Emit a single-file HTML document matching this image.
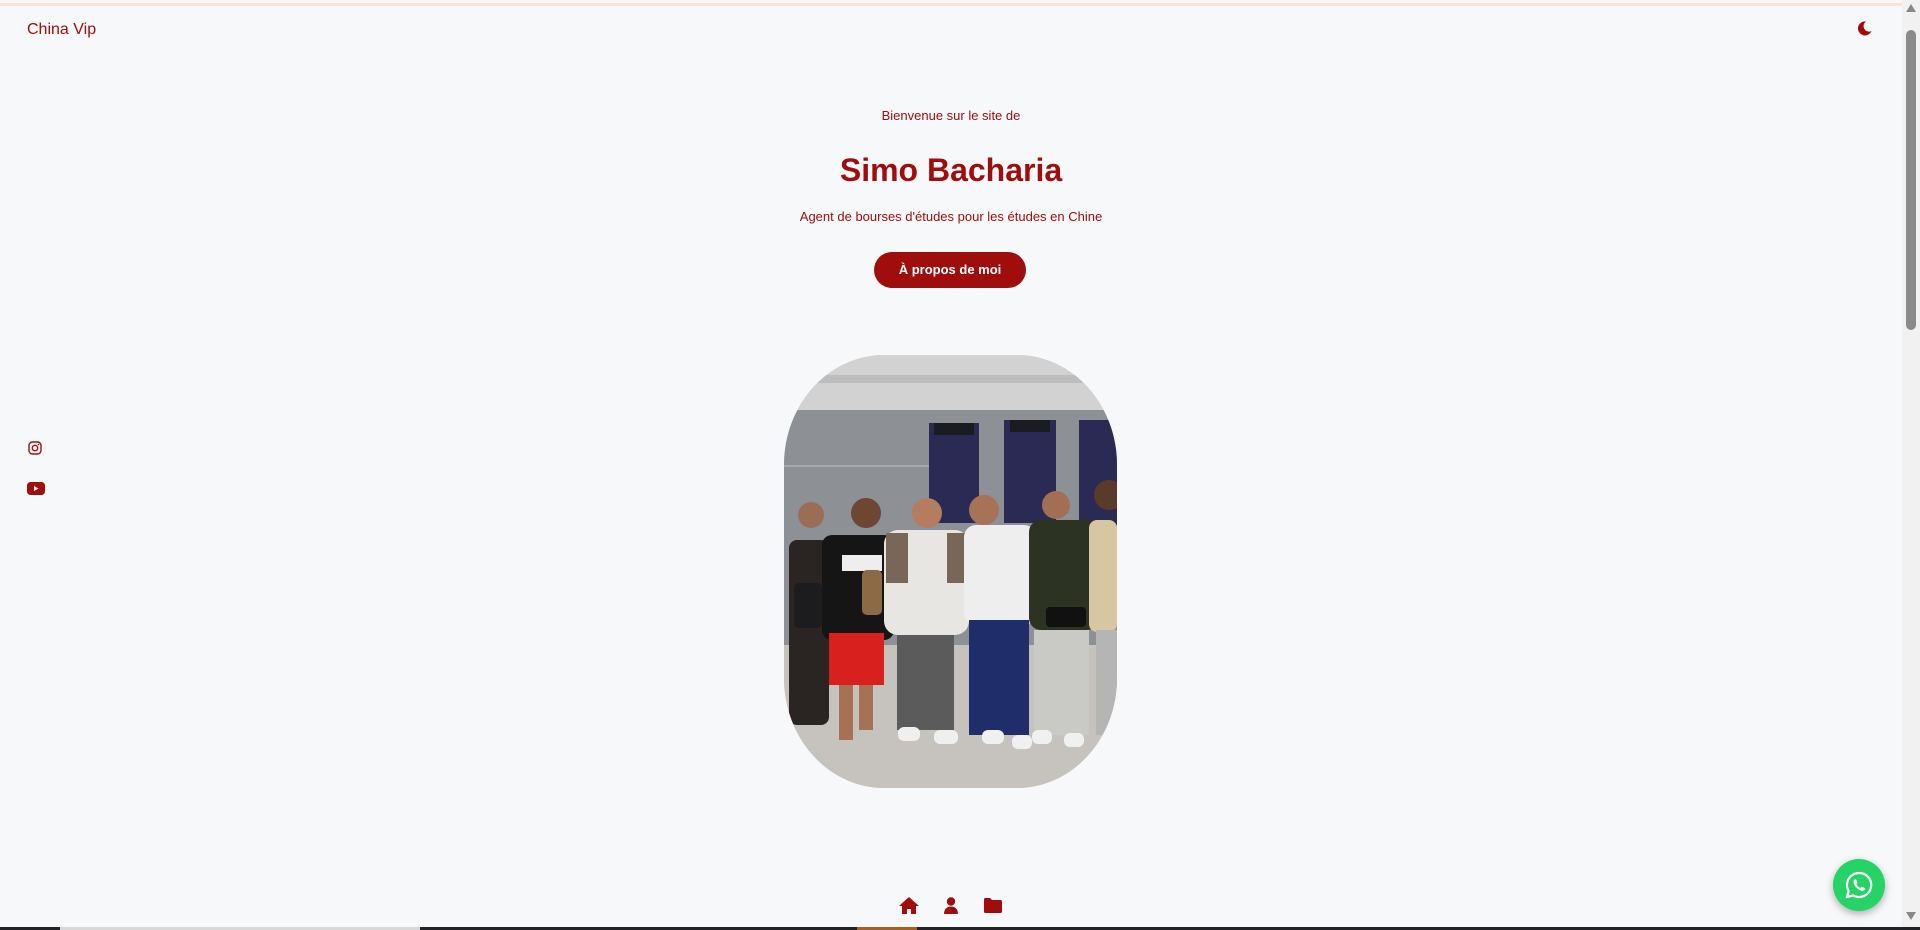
<!DOCTYPE html>
<html><head><meta charset="utf-8">
<style>
*{margin:0;padding:0;box-sizing:border-box}
html,body{width:1920px;height:930px;overflow:hidden;background:#f7f8fa;font-family:"Liberation Sans",sans-serif;color:#a00d0d}
.topline{position:absolute;left:0;top:3px;width:1902px;height:3px;background:#fbe2d5}
.brand{position:absolute;left:27px;top:21px;font-size:16px}
.moon{position:absolute;left:1857px;top:20px}
.sb{position:absolute;right:0;top:0;width:18px;height:927px;background:#f1f1f1}
.thumb{position:absolute;right:4px;top:30px;width:10px;height:300px;background:#8a8a8a;border-radius:5px}
.c{position:absolute;left:0;width:1902px;text-align:center}
.t1{top:108px;font-size:13px}
.t2{top:152px;font-size:32px;font-weight:bold}
.t3{top:209px;font-size:13px}
.btn{position:absolute;left:874px;top:252px;width:152px;height:36px;border-radius:18px;background:#a00d0d;color:#fff;font-size:13px;font-weight:bold;text-align:center;line-height:36px}
.photo{position:absolute;left:784px;top:355px;width:333px;height:433px;border-radius:100px/110px;overflow:hidden}
.wa{position:absolute;left:1833px;top:859px;width:52px;height:52px;border-radius:50%;background:#25d366;box-shadow:0 3px 8px rgba(0,0,0,.3)}
.bot{position:absolute;left:0;top:927px;width:1920px;height:3px;background:#222326}
</style></head><body>
<div class="topline"></div>
<div class="brand">China Vip</div>
<svg class="moon" width="16" height="16" viewBox="0 0 16 16"><path d="M9 1.5A7 7 0 1 0 14.5 11 5.5 5.5 0 0 1 9 1.5z" fill="#a00d0d"/></svg>
<div class="c t1">Bienvenue sur le site de</div>
<div class="c t2">Simo Bacharia</div>
<div class="c t3">Agent de bourses d'études pour les études en Chine</div>
<div class="btn">À propos de moi</div>
<div class="photo">
<svg width="333" height="433" viewBox="0 0 333 433">
<rect width="333" height="433" fill="#c9c6c2"/>
<rect width="333" height="55" fill="#d2d2d2"/>
<rect y="20" width="333" height="8" fill="#bdbdbd"/>
<rect y="55" width="333" height="235" fill="#8d9195"/>
<rect y="110" width="145" height="2" fill="#a7aaad"/>
<rect x="145" y="68" width="50" height="100" fill="#2b2a55"/>
<rect x="150" y="68" width="40" height="12" fill="#1b1b22"/>
<rect x="220" y="65" width="52" height="103" fill="#2b2a55"/>
<rect x="226" y="65" width="40" height="12" fill="#1b1b22"/>
<rect x="295" y="65" width="38" height="105" fill="#2b2a55"/>
<rect y="290" width="333" height="143" fill="#c6c3bf"/>
<rect x="5" y="185" width="40" height="185" rx="8" fill="#2a2422"/>
<circle cx="27" cy="160" r="13" fill="#9a6e55"/>
<rect x="10" y="228" width="28" height="45" rx="5" fill="#1c1c1e"/>
<rect x="38" y="180" width="72" height="105" rx="10" fill="#151515"/>
<rect x="58" y="200" width="40" height="16" fill="#eee"/>
<rect x="45" y="278" width="55" height="52" fill="#d8201e"/>
<rect x="55" y="330" width="14" height="55" fill="#a77155"/><rect x="75" y="330" width="14" height="45" fill="#a77155"/>
<circle cx="82" cy="158" r="15" fill="#6e4632"/>
<rect x="78" y="215" width="20" height="45" rx="5" fill="#8b6a45"/>
<rect x="100" y="175" width="85" height="105" rx="14" fill="#e8e6e3"/>
<rect x="102" y="178" width="22" height="50" fill="#7a6559"/><rect x="163" y="178" width="22" height="50" fill="#7a6559"/>
<rect x="113" y="280" width="57" height="95" fill="#5b5b5b"/>
<rect x="114" y="372" width="22" height="14" rx="6" fill="#efefef"/><rect x="150" y="375" width="24" height="14" rx="6" fill="#efefef"/>
<circle cx="143" cy="158" r="15" fill="#b47d60"/>
<rect x="180" y="170" width="72" height="100" rx="12" fill="#eeeeee"/>
<rect x="185" y="265" width="60" height="115" fill="#1f2d6a"/>
<rect x="198" y="375" width="22" height="14" rx="6" fill="#f0f0f0"/><rect x="228" y="380" width="20" height="14" rx="6" fill="#f0f0f0"/>
<circle cx="200" cy="155" r="15" fill="#a67258"/>
<rect x="245" y="165" width="70" height="110" rx="12" fill="#2c3322"/>
<rect x="262" y="252" width="40" height="20" rx="4" fill="#111"/>
<rect x="250" y="275" width="55" height="105" fill="#c9c9c5"/>
<rect x="248" y="375" width="20" height="14" rx="6" fill="#f0f0f0"/><rect x="280" y="378" width="20" height="14" rx="6" fill="#f0f0f0"/>
<circle cx="272" cy="150" r="14" fill="#a26f55"/>
<rect x="305" y="165" width="28" height="112" rx="8" fill="#d7c6a2"/>
<rect x="312" y="275" width="21" height="105" fill="#b5b5b5"/>
<circle cx="325" cy="140" r="15" fill="#5a3a2a"/>
</svg>
</div>
<svg style="position:absolute;left:28px;top:441px" width="14" height="14" viewBox="0 0 14 14"><rect x="1" y="1" width="12" height="12" rx="3.5" fill="none" stroke="#a00d0d" stroke-width="1.4"/><circle cx="7" cy="7" r="2.7" fill="none" stroke="#a00d0d" stroke-width="1.4"/><circle cx="10.5" cy="3.5" r=".8" fill="#a00d0d"/></svg>
<svg style="position:absolute;left:27px;top:482px" width="18" height="13" viewBox="0 0 18 13"><rect width="18" height="13" rx="3.5" fill="#a00d0d"/><path d="M7 4l4.5 2.5L7 9z" fill="#fff"/></svg>
<svg style="position:absolute;left:899px;top:897px" width="20" height="17" viewBox="0 0 20 17"><path d="M10 0L0 9h3v8h5v-5h4v5h5V9h3z" fill="#a00d0d"/></svg>
<svg style="position:absolute;left:944px;top:897px" width="14" height="17" viewBox="0 0 14 17"><circle cx="7" cy="4.5" r="4.2" fill="#a00d0d"/><path d="M0 17c0-5 3-7.5 7-7.5s7 2.5 7 7.5z" fill="#a00d0d"/></svg>
<svg style="position:absolute;left:984px;top:898px" width="18" height="15" viewBox="0 0 18 15"><path d="M0 1.5A1.5 1.5 0 0 1 1.5 0H6l2 2h8.5A1.5 1.5 0 0 1 18 3.5v10a1.5 1.5 0 0 1-1.5 1.5h-15A1.5 1.5 0 0 1 0 13.5z" fill="#a00d0d"/></svg>
<div class="wa"><svg width="52" height="52" viewBox="0 0 52 52"><path d="M26 14a12 12 0 0 0-10.4 18L14 38l6.2-1.6A12 12 0 1 0 26 14z" fill="none" stroke="#fff" stroke-width="2.2"/><path d="M21.5 20.5c.5-.6 1.3-.6 1.6 0l1.2 2.6c.2.4 0 .8-.3 1.1l-.7.7c.8 1.8 2.2 3.2 4 4l.8-.8c.3-.3.7-.4 1.1-.2l2.5 1.2c.5.3.6 1 0 1.5-1 1-2.4 1.5-4 .9-3.3-1.3-5.6-3.6-6.9-6.9-.6-1.6-.3-3 .7-4.1z" fill="#fff"/></svg></div>
<div class="sb"><div class="thumb"></div>
<svg style="position:absolute;left:4px;top:4px" width="10" height="8"><path d="M5 0l5 8H0z" fill="#888"/></svg>
<svg style="position:absolute;left:4px;top:912px" width="10" height="8"><path d="M0 0h10L5 8z" fill="#888"/></svg></div>
<div class="bot"><div style="position:absolute;left:60px;width:360px;height:3px;background:#d8d8d8"></div><div style="position:absolute;left:857px;width:60px;height:3px;background:#a0622a"></div></div>
</body></html>
